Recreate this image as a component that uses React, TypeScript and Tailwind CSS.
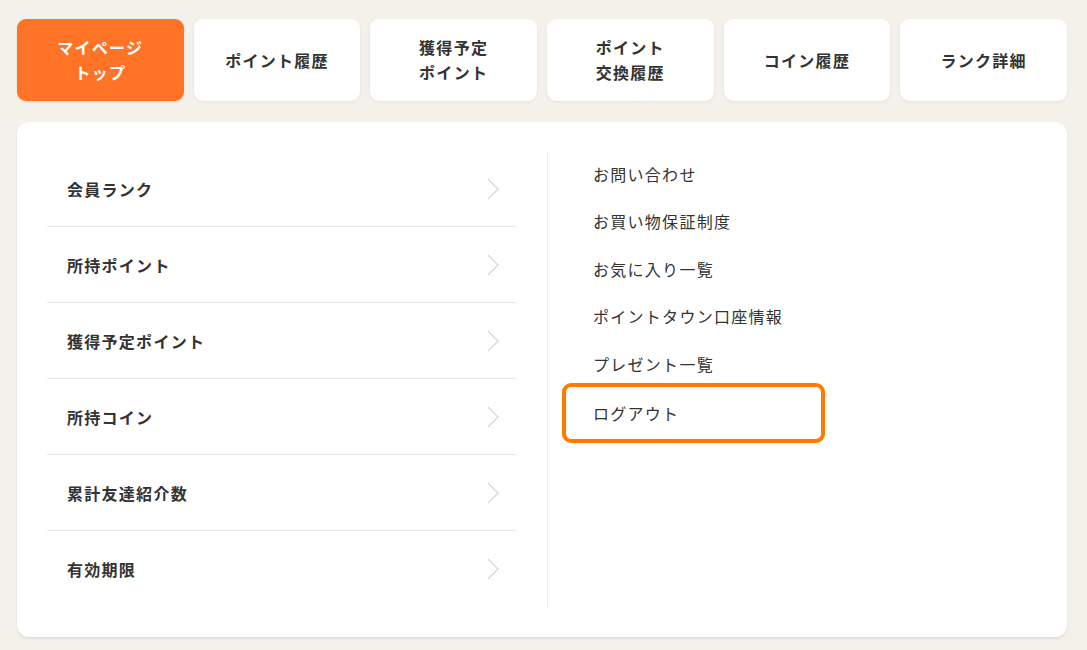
import React from "react";

const tabs = [
  { label: ["マイページ", "トップ"], active: true },
  { label: ["ポイント履歴"] },
  { label: ["獲得予定", "ポイント"] },
  { label: ["ポイント", "交換履歴"] },
  { label: ["コイン履歴"] },
  { label: ["ランク詳細"] },
];

const summaryRows = ["会員ランク", "所持ポイント", "獲得予定ポイント", "所持コイン", "累計友達紹介数", "有効期限"];

const links = ["お問い合わせ", "お買い物保証制度", "お気に入り一覧", "ポイントタウン口座情報", "プレゼント一覧"];

function Chevron() {
  return (
    <svg width="14" height="24" viewBox="0 0 14 24" fill="none" className="shrink-0">
      <path d="M2 2l10 10L2 22" stroke="#d6d6d6" strokeWidth="1.2" strokeLinejoin="miter" />
    </svg>
  );
}

export default function App() {
  return (
    <div
      className="min-h-[650px] w-full bg-[#f4f1ea] pl-[17px] pr-[20px] pt-[19px] pb-[14px] text-[#333]"
      style={{ fontFamily: '"Noto Sans CJK JP", "Noto Sans", sans-serif' }}
    >
      {/* Tabs */}
      <nav className="grid grid-cols-6 gap-[10px]">
        {tabs.map((t) => (
          <a
            key={t.label.join("")}
            className={
              "flex h-[82px] flex-col items-center justify-center rounded-[9px] text-center text-[16px] font-bold leading-[25px] tracking-[0.08em] shadow-[0_1px_3px_rgba(0,0,0,0.07)] " +
              (t.active ? "bg-[#ff7327] text-white" : "bg-white text-[#333]")
            }
          >
            {t.label.map((l) => (
              <span key={l}>{l}</span>
            ))}
          </a>
        ))}
      </nav>

      {/* Card */}
      <div className="mt-[21px] flex rounded-[12px] bg-white px-[30px] pt-[29px] pb-[30px] shadow-[0_2px_3px_rgba(0,0,0,0.08)]">
        <ul className="w-[469px]">
          {summaryRows.map((r, i) => (
            <li
              key={r}
              className={
                "flex h-[76px] items-center justify-between pl-[20px] pr-[16px] " +
                (i < summaryRows.length - 1 ? "border-b border-[#e9e7e4]" : "")
              }
            >
              <span className="text-[16px] font-bold tracking-[0.08em]">{r}</span>
              <Chevron />
            </li>
          ))}
        </ul>

        <div className="ml-[31px] flex-1 border-l border-[#ececec] pl-[14px]">
          <ul className="-mt-[1px]">
            {links.map((l) => (
              <li key={l} className="flex h-[47.5px] items-center pl-[31px] text-[16px] tracking-[0.08em]">
                {l}
              </li>
            ))}
            {/* focused item */}
            <li className="flex h-[47.5px] items-center pl-[4px]">
              <a className="mt-[4px] flex h-[52px] w-[255px] shrink-0 items-center rounded-[5px] pl-[27px] text-[16px] tracking-[0.08em] outline-4 outline-offset-0 outline-[#ff7a00]">
                ログアウト
              </a>
            </li>
          </ul>
        </div>
      </div>
    </div>
  );
}
